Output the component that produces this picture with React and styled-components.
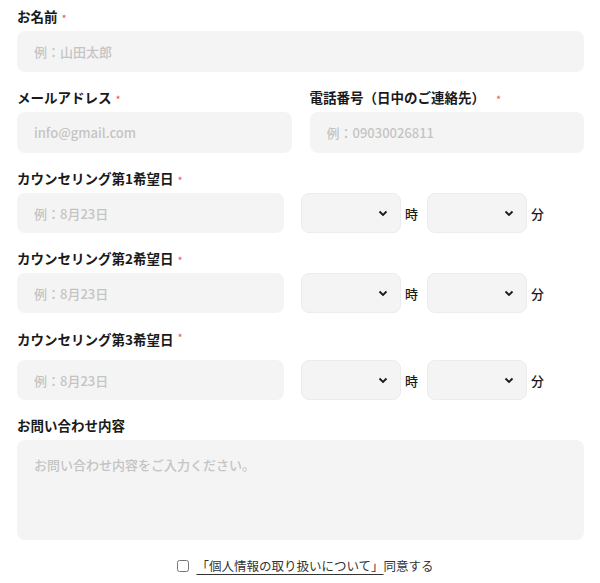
import React from 'react'
import styled, { createGlobalStyle } from 'styled-components'

const Global = createGlobalStyle`
  body {
    margin: 0;
    background: #fff;
    font-family: "Noto Sans CJK JP", "Noto Sans", sans-serif;
    color: #1a1a1a;
  }
`

const Form = styled.form`
  padding: 6px 16px 0 17px;
  display: flex;
  flex-direction: column;
  gap: 15px;
`

const Row = styled.div`
  display: grid;
  grid-template-columns: 1fr 1fr;
  gap: 18px;
`

const Field = styled.div`
  display: flex;
  flex-direction: column;
  gap: ${p => p.$gap || 5}px;
  margin-top: ${p => p.$shift || 0}px;
`

const Label = styled.label`
  font-size: 13.5px;
  font-weight: 700;
  line-height: 20px;
  display: flex;
  align-items: center;
`

const Req = styled.span`
  color: #eb5a57;
  font-size: 11px;
  font-weight: 400;
  margin-left: ${p => (p.$wide ? 11 : 4)}px;
  line-height: 20px;
  position: relative;
  top: ${p => (p.$sup ? -2 : 2)}px;
`

const Input = styled.input`
  box-sizing: border-box;
  width: 100%;
  height: 41px;
  border: none;
  border-radius: 8px;
  background: #f4f4f4;
  padding: 0 17px;
  font-family: inherit;
  font-size: 13px;
  font-weight: 500;
  outline: none;
  &::placeholder {
    color: #c4c4c4;
  }
`

const DateRow = styled.div`
  display: flex;
  align-items: center;
`

const DateInput = styled(Input)`
  width: 267px;
  height: 40px;
  margin-right: 17px;
`

const SelectWrap = styled.div`
  position: relative;
  width: 100px;
  height: 40px;
  box-sizing: border-box;
  border: 1px solid #ececec;
  border-radius: 8px;
  background: #f4f4f4;
`

const Chevron = styled.svg`
  position: absolute;
  right: 12px;
  top: 15px;
`

const Unit = styled.span`
  font-size: 13px;
  font-weight: 500;
  width: 13px;
  margin: 0 9px 0 4px;
`

const TextArea = styled.textarea`
  box-sizing: border-box;
  width: 100%;
  height: 100px;
  border: none;
  border-radius: 8px;
  background: #f4f4f4;
  padding: 15px 17px;
  font-family: inherit;
  font-size: 13px;
  font-weight: 500;
  resize: none;
  outline: none;
  &::placeholder {
    color: #c4c4c4;
  }
`

const Agree = styled.div`
  display: flex;
  justify-content: center;
  align-items: center;
  margin-top: 1px;
  font-size: 12.5px;
  color: #333;
  padding-left: 10px;
`

const Check = styled.input`
  width: 12px;
  height: 12px;
  margin: 0 7px 0 0;
`

const Link = styled.a`
  color: #333;
  text-decoration: underline;
  text-underline-offset: 3px;
`

function TimeSelect() {
  return (
    <SelectWrap>
      <Chevron width="10" height="8" viewBox="0 0 10 8">
        <path d="M1.5 2.5 L5 6 L8.5 2.5" fill="none" stroke="#1a1a1a" strokeWidth="1.8" />
      </Chevron>
    </SelectWrap>
  )
}

function DateField({ label, shift, gap, sup }) {
  return (
    <Field $shift={shift} $gap={gap}>
      <Label>
        {label}
        <Req $sup={sup}>*</Req>
      </Label>
      <DateRow>
        <DateInput placeholder="例：8月23日" />
        <TimeSelect />
        <Unit>時</Unit>
        <TimeSelect />
        <Unit>分</Unit>
      </DateRow>
    </Field>
  )
}

export default function App() {
  return (
    <>
      <Global />
      <Form>
        <Field>
          <Label>お名前<Req>*</Req></Label>
          <Input placeholder="例：山田太郎" />
        </Field>
        <Row>
          <Field>
            <Label>メールアドレス<Req>*</Req></Label>
            <Input placeholder="info@gmail.com" />
          </Field>
          <Field>
            <Label>電話番号（日中のご連絡先）<Req $wide>*</Req></Label>
            <Input placeholder="例：09030026811" />
          </Field>
        </Row>
        <DateField label="カウンセリング第1希望日" />
        <DateField label="カウンセリング第2希望日" />
        <DateField label="カウンセリング第3希望日" shift={1} gap={11} sup />
        <Field>
          <Label>お問い合わせ内容</Label>
          <TextArea placeholder="お問い合わせ内容をご入力ください。" />
        </Field>
        <Agree>
          <Check type="checkbox" />
          <Link href="#">「個人情報の取り扱いについて」</Link>同意する
        </Agree>
      </Form>
    </>
  )
}
